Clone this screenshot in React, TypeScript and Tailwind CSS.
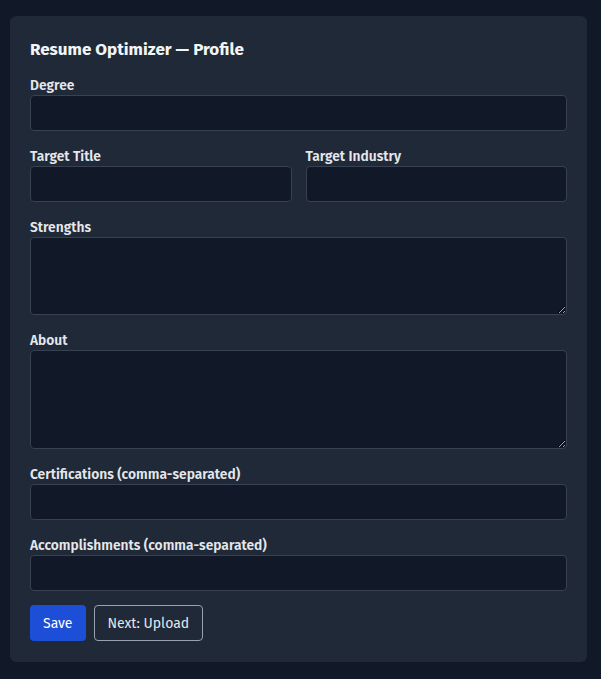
import React from "react";

function Field({ label, children }: { label: string; children: React.ReactNode }) {
  return (
    <div className="flex flex-col">
      <label className="text-[13.8px] font-semibold leading-[18px] text-gray-200">{label}</label>
      {children}
    </div>
  );
}

const inputCls =
  "w-full h-9 rounded bg-[#111827] border border-[#374151] px-3 text-sm text-gray-100 outline-none";

export default function App() {
  return (
    <div
      className="min-h-screen bg-[#111827] pt-4 pl-[10px]"
      style={{ fontFamily: '"Fira Sans", "Noto Sans", sans-serif' }}
    >
      <div className="w-[577px] rounded-md bg-[#1f2937] px-5 pt-5 pb-[21px]">
        <h1 className="text-[17px] font-bold text-gray-100 leading-7 mb-[13px]">
          Resume Optimizer — Profile
        </h1>

        <div className="flex flex-col gap-[17px]">
          <Field label="Degree">
            <input className={inputCls} />
          </Field>

          <div className="grid grid-cols-2 gap-x-[14px]">
            <Field label="Target Title">
              <input className={inputCls} />
            </Field>
            <Field label="Target Industry">
              <input className={inputCls} />
            </Field>
          </div>

          <Field label="Strengths">
            <textarea className="w-full h-[78px] rounded bg-[#111827] border border-[#374151] px-3 py-2 text-sm text-gray-100 outline-none" />
          </Field>

          <Field label="About">
            <textarea className="w-full h-[99px] rounded bg-[#111827] border border-[#374151] px-3 py-2 text-sm text-gray-100 outline-none" />
          </Field>

          <Field label="Certifications (comma-separated)">
            <input className={inputCls} />
          </Field>

          <Field label="Accomplishments (comma-separated)">
            <input className={inputCls} />
          </Field>

          <div className="flex gap-2 -mt-[3px]">
            <button className="h-9 px-[13px] pt-[2px] rounded bg-[#1d4ed8] text-sm text-white">Save</button>
            <button className="h-9 px-[13px] pt-[2px] rounded border border-gray-400 text-sm text-gray-200">
              Next: Upload
            </button>
          </div>
        </div>
      </div>
    </div>
  );
}
